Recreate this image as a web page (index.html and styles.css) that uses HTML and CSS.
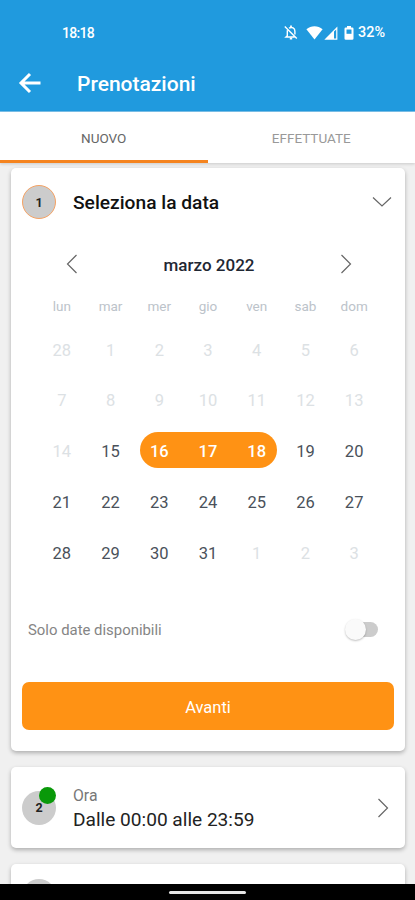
FILE: index.html
```html
<!DOCTYPE html>
<html lang="it">
<head>
<meta charset="utf-8">
<title>Prenotazioni</title>
<link rel="stylesheet" href="styles.css">
</head>
<body>
<div class="app">
  <header class="header">
    <div class="status">
      <span class="clock">18:18</span>
      <div class="status-icons">
        <svg class="bell" width="14" height="15" viewBox="0 0 14 15" fill="none" stroke="#fff" stroke-width="1.4"><path d="M.8 1.500l12 12M3.300 5.200v5.600L2 12h8.600M5 3.200c3-1.800 5.900 0 5.900 3v3.200"/><path d="M7 .6v1.600M5.800 13.500h2.400" stroke-width="1.800"/></svg>
        <svg class="wifi" width="17" height="14" viewBox="0 0 17 14"><path d="M.4 3.300C5-.7 12-.7 16.600 3.300L8.500 13.600z" fill="#fff"/></svg>
        <svg class="signal" width="14" height="14" viewBox="0 0 14 14"><path d="M.3 13.700L13.400.5v13.200z" fill="#fff"/><path d="M10 5.600l2.200-2.200v9.100H10z" fill="#209ade"/></svg>
        <svg class="battery" width="10" height="14" viewBox="0 0 10 14"><path d="M3 0h4v1.500h1.200q1.300 0 1.300 1.300v9.700q0 1.300-1.300 1.300H1.800Q.5 13.800.5 12.500V2.800Q.5 1.500 1.800 1.500H3z" fill="#fff"/><path d="M2.500 3.500h5v4.300h-5z" fill="#209ade"/></svg>
        <span class="percent">32%</span>
      </div>
    </div>
    <div class="toolbar">
      <svg width="24" height="22" viewBox="0 0 24 22" fill="none" stroke="#fff" stroke-width="3"><path d="M22.500 11H3M12 2L3 11l9 9"/></svg>
      <h1>Prenotazioni</h1>
    </div>
  </header>
  <nav class="tabs">
    <div class="tab active"><span>NUOVO</span></div>
    <div class="tab"><span>EFFETTUATE</span></div>
  </nav>
  <main class="content">
    <section class="card date-card">
      <div class="card-head">
        <span class="step current">1</span>
        <h2>Seleziona la data</h2>
        <svg class="down" width="20" height="12" viewBox="0 0 20 12" fill="none" stroke="#666" stroke-width="1.200"><path d="M1 1.500l9 8.500 9-8.500"/></svg>
      </div>
      <div class="month">
        <svg width="12" height="20" viewBox="0 0 12 20" fill="none" stroke="#666" stroke-width="1.200"><path d="M10.500 1L1.500 10l9 9"/></svg>
        <strong>marzo 2022</strong>
        <svg width="12" height="20" viewBox="0 0 12 20" fill="none" stroke="#666" stroke-width="1.200"><path d="M1.500 1l9 9-9 9"/></svg>
      </div>
      <div class="week names"><span>lun</span><span>mar</span><span>mer</span><span>gio</span><span>ven</span><span>sab</span><span>dom</span></div>
      <div class="week off"><span>28</span><span>1</span><span>2</span><span>3</span><span>4</span><span>5</span><span>6</span></div>
      <div class="week off"><span>7</span><span>8</span><span>9</span><span>10</span><span>11</span><span>12</span><span>13</span></div>
      <div class="week"><span class="off">14</span><span>15</span><span class="sel first">16</span><span class="sel">17</span><span class="sel last">18</span><span>19</span><span>20</span></div>
      <div class="week"><span>21</span><span>22</span><span>23</span><span>24</span><span>25</span><span>26</span><span>27</span></div>
      <div class="week"><span>28</span><span>29</span><span>30</span><span>31</span><span class="off">1</span><span class="off">2</span><span class="off">3</span></div>
      <div class="filter"><span>Solo date disponibili</span><div class="switch"><div class="knob"></div></div></div>
      <div class="next">Avanti</div>
    </section>
    <section class="card time-card">
      <span class="step">2<i class="dot"></i></span>
      <div class="time"><span class="label">Ora</span><span class="value">Dalle 00:00 alle 23:59</span></div>
      <svg width="12" height="20" viewBox="0 0 12 20" fill="none" stroke="#666" stroke-width="1.200"><path d="M1.500 1l9 9-9 9"/></svg>
    </section>
    <section class="card third-card"><span class="step"></span></section>
  </main>
  <footer class="navbar"><div class="handle"></div></footer>
</div>
</body>
</html>
```
FILE: styles.css
```css
* { box-sizing: border-box; }
body { margin: 0; font-family: Roboto, "Liberation Sans", sans-serif; }
svg { display: block; flex: none; }
h1, h2 { margin: 0; }
.app { width: 415px; height: 900px; display: flex; flex-direction: column; overflow: hidden; background: #f0f0f0; }
.header { flex: none; height: 112px; background: #209ade; border-bottom: 1px solid #7cc2eb; color: #fff; }
.status { height: 55px; padding: 10px 30px 0 62px; display: flex; align-items: center; justify-content: space-between; font-size: 14px; font-weight: 500; }
.clock { letter-spacing: -0.7px; }
.status-icons { display: flex; align-items: center; }
.bell { margin-right: 8px; }
.signal { margin: 0 6px 0 1px; }
.battery { margin-right: 4px; }
.percent { font-size: 14.400px; }
.toolbar { height: 55px; padding-left: 18px; display: flex; align-items: center; gap: 35px; }
.toolbar h1 { font-size: 21px; line-height: 26px; font-weight: 500; padding-top: 2px; }
.tabs { flex: none; height: 51px; display: flex; background: #fff; box-shadow: 0 1px 3px rgba(0,0,0,.16); position: relative; }
.tab { flex: 1; display: flex; align-items: center; justify-content: center; padding-top: 3px; font-size: 13.500px; color: #999; border-bottom: 3px solid transparent; }
.tab.active { color: #666; border-color: #f5841f; }
.content { flex: 1; min-height: 0; overflow: hidden; padding: 5px 10px 0 11px; display: flex; flex-direction: column; gap: 16px; }
.card { flex: none; background: #fff; border-radius: 5px; box-shadow: 0 2px 4px rgba(0,0,0,.28); }
.date-card { height: 583px; padding: 0 11px; }
.card-head { height: 68px; display: flex; align-items: center; }
.card-head h2 { font-size: 19.200px; font-weight: 500; color: #111; flex: 1; margin-left: 17px; }
.down { margin-right: 2px; }
.step { width: 34px; height: 34px; border-radius: 50%; background: #ccc; display: flex; align-items: center; justify-content: center; font-size: 12.500px; font-weight: 700; color: #222; position: relative; flex: none; }
.current { border: 1px solid #f5a263; }
.month { height: 56px; padding: 0 42px 0 44px; display: flex; align-items: center; justify-content: space-between; }
.month strong { font-size: 17px; font-weight: 500; color: #1f2733; padding-top: 2px; }
.week { display: grid; grid-template-columns: repeat(7, 1fr); margin: 0 15.500px 14.750px; height: 36px; color: #4a515a; font-size: 16.500px; }
.week span { display: flex; align-items: center; justify-content: center; padding-top: 4px; }
.week.names { height: 24px; margin-bottom: 14px; font-size: 13.500px; color: #bcc3ca; }
.week.names span { padding-top: 4px; }
.week.off, .week .off { color: #dce1e4; }
.week .sel { background: #ff9214; color: #fff; font-weight: 500; }
.week .first { border-radius: 18px 0 0 18px; margin-left: 5px; padding-right: 5px; }
.week .last { border-radius: 0 18px 18px 0; margin-right: 4px; padding-left: 4px; }
.filter { height: 30px; margin: 45px 16px 0 6px; display: flex; align-items: center; justify-content: space-between; font-size: 14.900px; color: #858585; }
.filter > span { padding-top: 2px; }
.switch { width: 31px; height: 15px; border-radius: 8px; background: #ccc; display: flex; align-items: center; }
.knob { flex: none; width: 21px; height: 21px; margin-left: -2px; border-radius: 50%; background: #fafafa; box-shadow: 0 1px 2px rgba(0,0,0,.25); }
.next { margin-top: 38px; height: 48px; border-radius: 7px; background: #ff9214; color: #fff; font-size: 16.500px; display: flex; align-items: center; justify-content: center; padding-top: 2px; }
.time-card { height: 81px; padding: 0 16px 0 11px; display: flex; align-items: center; }
.time { flex: 1; margin-left: 17px; display: flex; flex-direction: column; padding-top: 3px; }
.label { font-size: 15.800px; line-height: 22px; color: #777; }
.value { font-size: 19.100px; line-height: 26px; color: #222; }
.dot { position: absolute; width: 17px; height: 17px; right: 0; top: -4px; border-radius: 50%; background: #099909; }
.third-card { height: 81px; padding: 15px 11px; }
.navbar { flex: none; height: 16px; background: #000; display: flex; justify-content: center; padding-top: 7px; position: relative; }
.handle { width: 77px; height: 3px; border-radius: 2px; background: #e5e5e5; }
```
